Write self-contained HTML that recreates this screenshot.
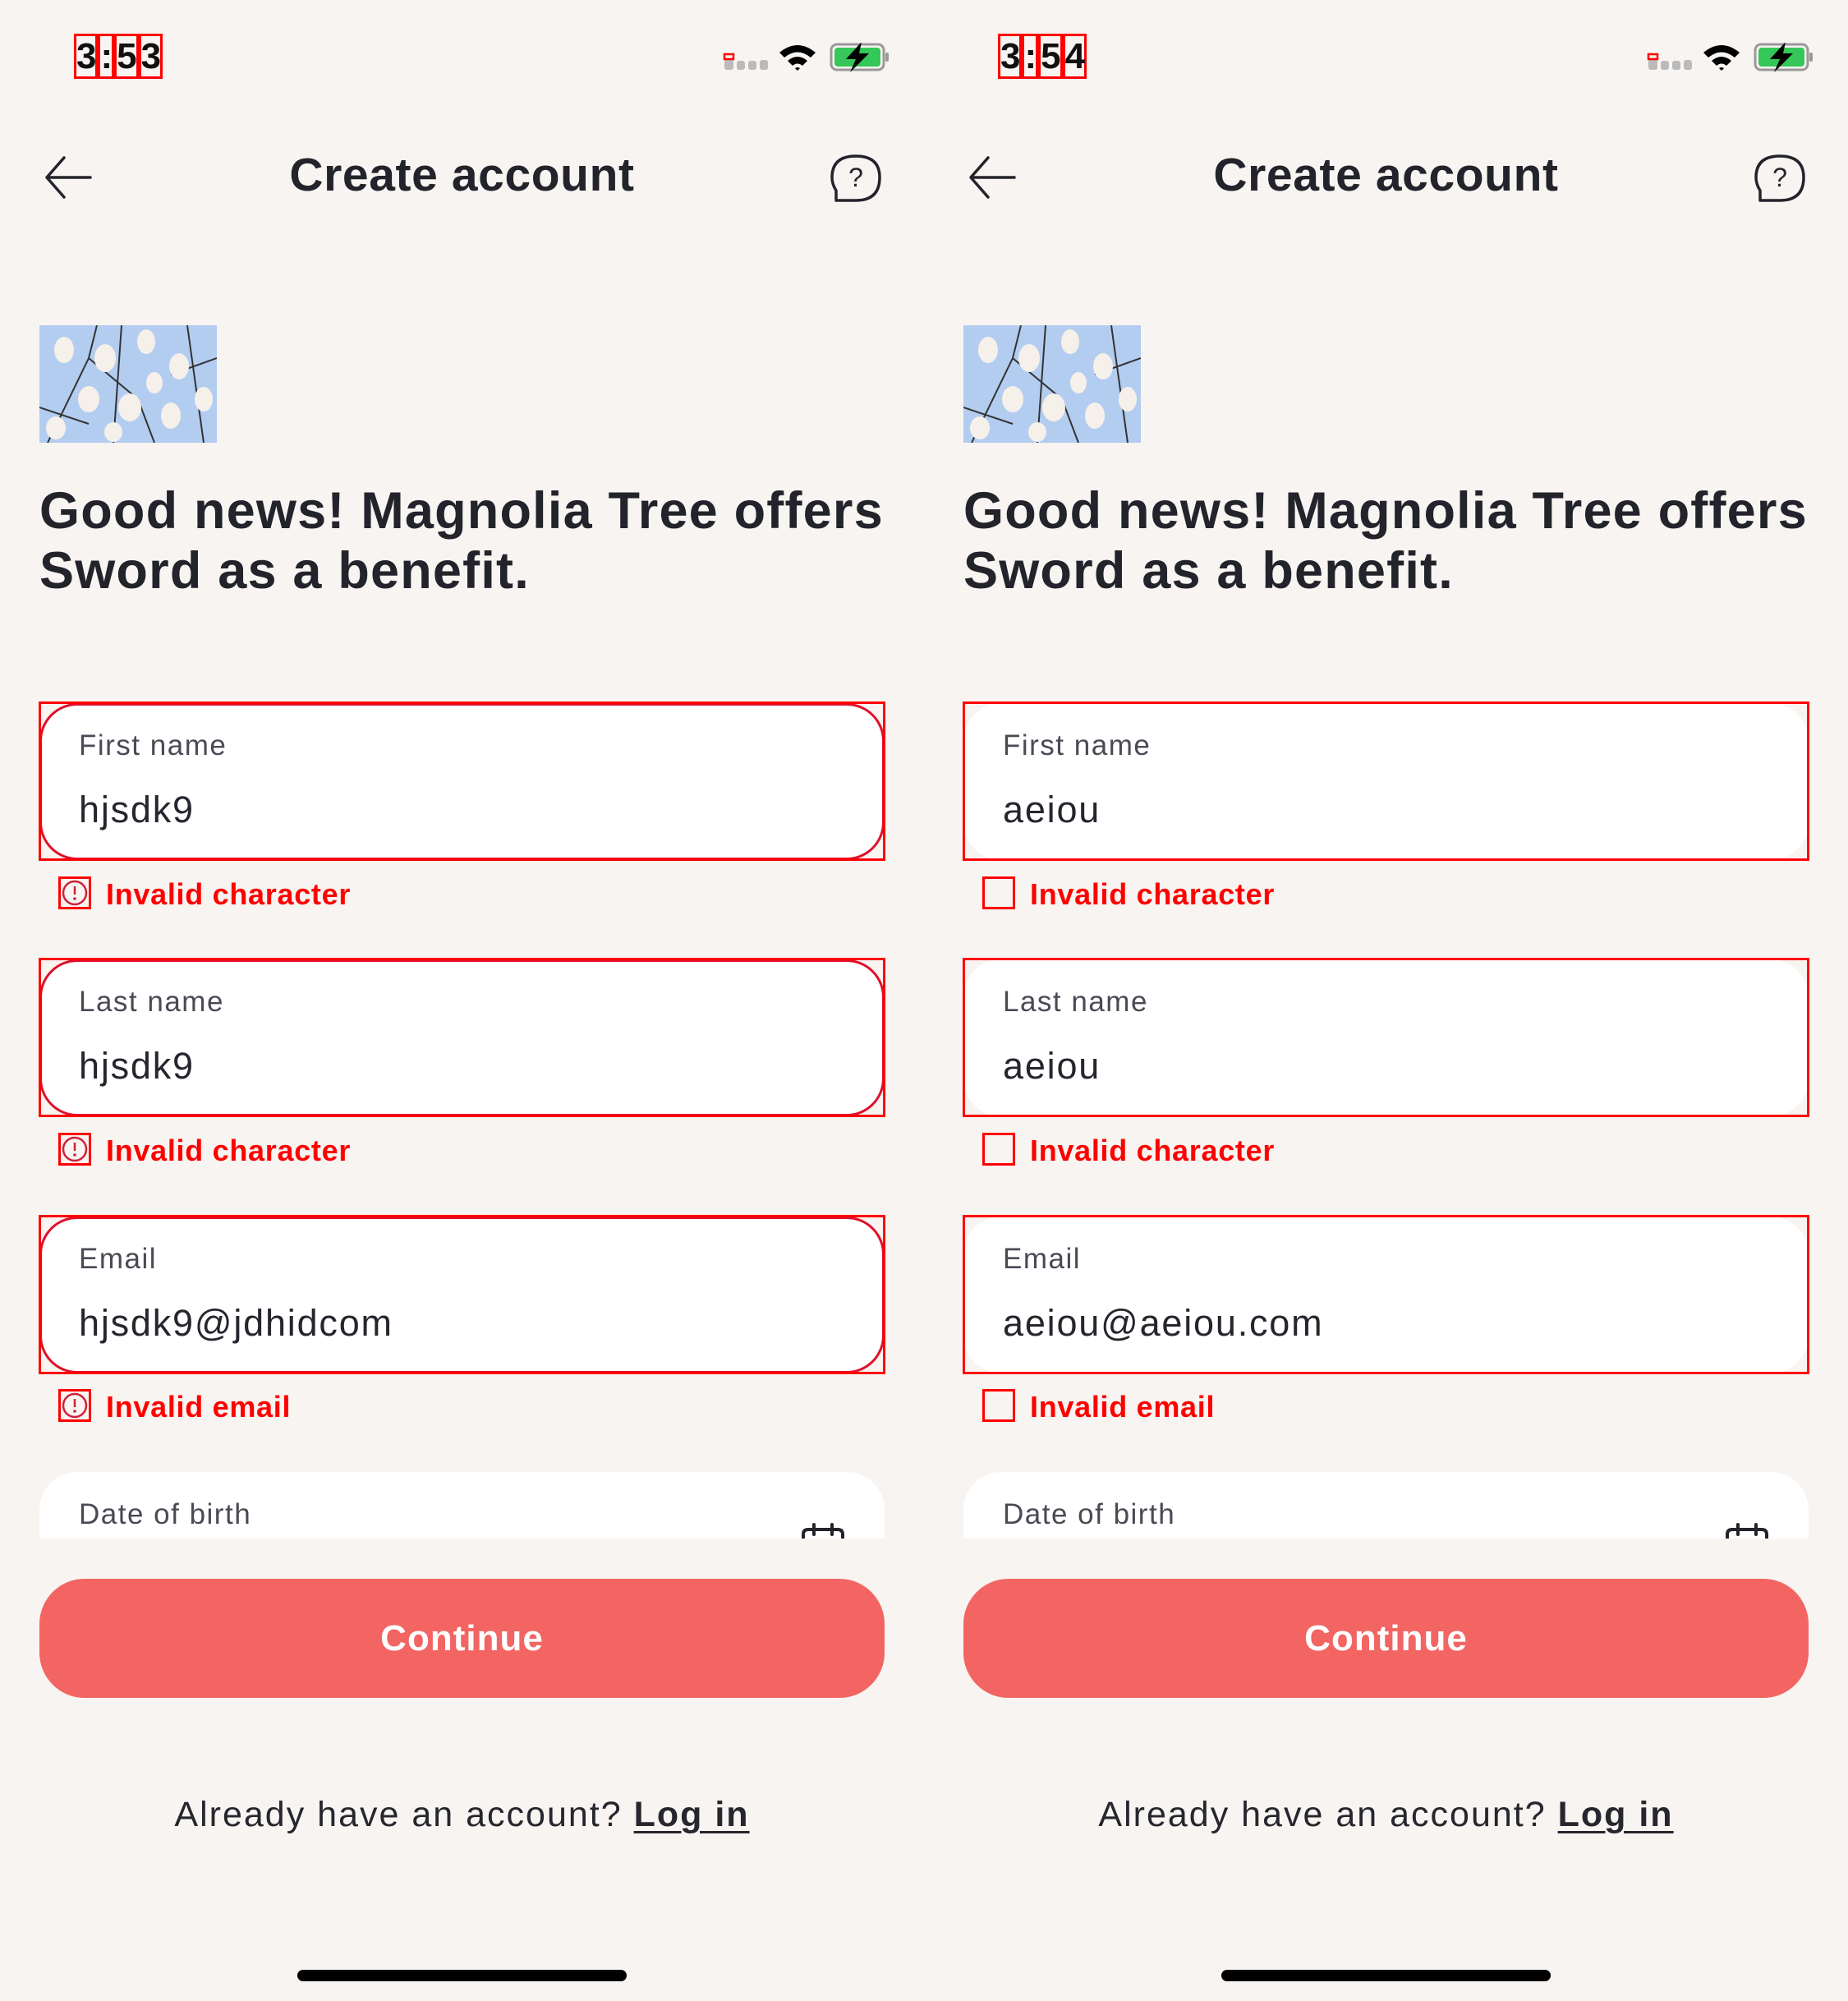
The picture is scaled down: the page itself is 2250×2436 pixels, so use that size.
<!DOCTYPE html>
<html><head><meta charset="utf-8">
<style>
*{margin:0;padding:0;box-sizing:border-box}
html,body{width:2250px;height:2436px;background:#f7f4f1;overflow:hidden;font-family:"Liberation Sans",sans-serif}
.p{position:absolute;top:0;width:1125px;height:2436px}
.a{position:absolute}
.time{left:90px;top:44px;font-size:44px;font-weight:700;color:#111;letter-spacing:-1px}
.timebox{border:3px solid #f00}
.title{left:0;width:1125px;top:180px;text-align:center;font-size:57px;font-weight:700;color:#23232b;letter-spacing:0.6px}
.head{left:48px;top:586px;font-size:63px;font-weight:700;color:#23232b;line-height:73px;letter-spacing:1.2px}
.card{left:48px;width:1029px;height:191px;background:#fff;border-radius:46px}
.rect{left:47px;width:1031px;height:194px;border:3px solid #f00}
.rb{border:3px solid #e0102a}
.lbl{left:96px;font-size:35px;color:#4a4a55;letter-spacing:1.5px}
.val{left:96px;font-size:45px;color:#26262e;letter-spacing:1.8px}
.err{left:129px;font-size:36px;font-weight:700;color:#f00;letter-spacing:0.7px}
.eicon{left:71px;width:40px;height:40px;border:3px solid #f00}
.btn{left:48px;top:1922px;width:1029px;height:145px;background:#f26563;border-radius:55px;color:#fff;font-size:44px;font-weight:700;text-align:center;line-height:145px;letter-spacing:1px}
.foot{left:0;width:1125px;top:2185px;text-align:center;font-size:43px;color:#26262e;letter-spacing:2px}
.foot u{font-weight:700;text-decoration-thickness:3px;text-underline-offset:6px}
.home{left:362px;top:2398px;width:401px;height:14px;background:#000;border-radius:7px}
</style></head><body>

<div class="p" style="left:0">
  <div class="a time"><span class="timebox">3</span><span class="timebox">:</span><span class="timebox">5</span><span class="timebox">3</span></div>
  <svg class="a" style="left:875px;top:52px" width="210" height="40" viewBox="0 0 210 40">
    <rect x="7" y="20" width="11" height="13" rx="3" fill="#bbb"/><rect x="22" y="22" width="10" height="11" rx="3" fill="#bbb"/><rect x="36" y="22" width="10" height="11" rx="3" fill="#bbb"/><rect x="50" y="21" width="10" height="12" rx="3" fill="#bbb"/>
    <rect x="7" y="14" width="11" height="6" fill="none" stroke="#f00" stroke-width="2.5"/>
    <path d="M74 12 Q96 -6 118 12 L112 18 Q96 5 80 18 Z M84 22 Q96 12 108 22 L102 28 Q96 23 90 28 Z M93 31 L96 34 L99 31 Q96 29 93 31Z" fill="#000"/>
    <rect x="137" y="2" width="64" height="31" rx="7" fill="none" stroke="#999" stroke-width="3"/>
    <rect x="141" y="6" width="56" height="23" rx="4" fill="#35c759"/>
    <rect x="203" y="12" width="4" height="11" rx="2" fill="#999"/>
    <path d="M174 -1 L155 20 L167 20 L160 36 L183 13 L171 13 Z" fill="#000"/>
  </svg>
  <svg class="a" style="left:54px;top:188px" width="60" height="56" viewBox="0 0 60 56"><path d="M56 28 H4 M24 4 L3 28 L24 52" stroke="#23232b" stroke-width="3.5" fill="none" stroke-linecap="round" stroke-linejoin="round"/></svg>
  <div class="a title">Create account</div>
  <svg class="a" style="left:1010px;top:186px" width="64" height="62" viewBox="0 0 64 62"><path d="M8 58 L8 46 Q3 38 3 30 Q3 4 32 4 Q61 4 61 30 Q61 58 32 58 Z" fill="none" stroke="#23232b" stroke-width="3.5" stroke-linejoin="round"/><text x="32" y="41" text-anchor="middle" font-size="32" font-family="Liberation Sans" fill="#23232b">?</text></svg>
  <svg class="a" style="left:48px;top:396px" width="216" height="143" viewBox="0 0 216 143"><rect width="216" height="143" fill="#b3cdf0"/><g stroke="#333" stroke-width="2" fill="none"><path d="M10 143 L60 40 L70 0 M60 40 L120 90 L140 143 M100 0 L90 143 M180 0 L200 143 M160 60 L216 40 M0 100 L60 120"/></g><g fill="#f5f0ea"><ellipse cx="30" cy="30" rx="12" ry="16"/><ellipse cx="80" cy="40" rx="13" ry="17"/><ellipse cx="130" cy="20" rx="11" ry="15"/><ellipse cx="170" cy="50" rx="12" ry="16"/><ellipse cx="60" cy="90" rx="13" ry="16"/><ellipse cx="110" cy="100" rx="14" ry="17"/><ellipse cx="160" cy="110" rx="12" ry="16"/><ellipse cx="200" cy="90" rx="11" ry="15"/><ellipse cx="20" cy="125" rx="12" ry="14"/><ellipse cx="140" cy="70" rx="10" ry="13"/><ellipse cx="90" cy="130" rx="11" ry="12"/></g></svg>
  <div class="a head">Good news! Magnolia Tree offers<br>Sword as a benefit.</div>

  <div class="a card rb" style="top:856px"></div><div class="a rect" style="top:854px"></div>
  <div class="a lbl" style="top:888px">First name</div><div class="a val" style="top:960px">hjsdk9</div>
  <div class="a eicon" style="top:1067px"><svg width="34" height="34" viewBox="0 0 34 34" style="display:block"><circle cx="17" cy="17" r="14" fill="none" stroke="#d0203a" stroke-width="2.5"/><path d="M17 9 V19" stroke="#d0203a" stroke-width="2.5"/><circle cx="17" cy="24" r="1.8" fill="#d0203a"/></svg></div>
  <div class="a err" style="top:1068px">Invalid character</div>

  <div class="a card rb" style="top:1168px"></div><div class="a rect" style="top:1166px"></div>
  <div class="a lbl" style="top:1200px">Last name</div><div class="a val" style="top:1272px">hjsdk9</div>
  <div class="a eicon" style="top:1379px"><svg width="34" height="34" viewBox="0 0 34 34" style="display:block"><circle cx="17" cy="17" r="14" fill="none" stroke="#d0203a" stroke-width="2.5"/><path d="M17 9 V19" stroke="#d0203a" stroke-width="2.5"/><circle cx="17" cy="24" r="1.8" fill="#d0203a"/></svg></div>
  <div class="a err" style="top:1380px">Invalid character</div>

  <div class="a card rb" style="top:1481px"></div><div class="a rect" style="top:1479px"></div>
  <div class="a lbl" style="top:1513px">Email</div><div class="a val" style="top:1585px">hjsdk9@jdhidcom</div>
  <div class="a eicon" style="top:1691px"><svg width="34" height="34" viewBox="0 0 34 34" style="display:block"><circle cx="17" cy="17" r="14" fill="none" stroke="#d0203a" stroke-width="2.5"/><path d="M17 9 V19" stroke="#d0203a" stroke-width="2.5"/><circle cx="17" cy="24" r="1.8" fill="#d0203a"/></svg></div>
  <div class="a err" style="top:1692px">Invalid email</div>

  <div class="a" style="left:48px;top:1792px;width:1029px;height:81px;overflow:hidden"><div style="width:1029px;height:191px;background:#fff;border-radius:46px"></div>
    <svg style="position:absolute;left:926px;top:62px" width="56" height="30" viewBox="0 0 56 30"><path d="M4 30 V14 Q4 8 10 8 H46 Q52 8 52 14 V30 M17 2 V14 M39 2 V14" stroke="#23232b" stroke-width="4" fill="none" stroke-linecap="round"/></svg></div>
  <div class="a lbl" style="top:1824px">Date of birth</div>

  <div class="a btn">Continue</div>
  <div class="a foot">Already have an account? <u>Log in</u></div>
  <div class="a home"></div>
</div>

<div class="p" style="left:1125px">
  <div class="a time"><span class="timebox">3</span><span class="timebox">:</span><span class="timebox">5</span><span class="timebox">4</span></div>
  <svg class="a" style="left:875px;top:52px" width="210" height="40" viewBox="0 0 210 40">
    <rect x="7" y="20" width="11" height="13" rx="3" fill="#bbb"/><rect x="22" y="22" width="10" height="11" rx="3" fill="#bbb"/><rect x="36" y="22" width="10" height="11" rx="3" fill="#bbb"/><rect x="50" y="21" width="10" height="12" rx="3" fill="#bbb"/>
    <rect x="7" y="14" width="11" height="6" fill="none" stroke="#f00" stroke-width="2.5"/>
    <path d="M74 12 Q96 -6 118 12 L112 18 Q96 5 80 18 Z M84 22 Q96 12 108 22 L102 28 Q96 23 90 28 Z M93 31 L96 34 L99 31 Q96 29 93 31Z" fill="#000"/>
    <rect x="137" y="2" width="64" height="31" rx="7" fill="none" stroke="#999" stroke-width="3"/>
    <rect x="141" y="6" width="56" height="23" rx="4" fill="#35c759"/>
    <rect x="203" y="12" width="4" height="11" rx="2" fill="#999"/>
    <path d="M174 -1 L155 20 L167 20 L160 36 L183 13 L171 13 Z" fill="#000"/>
  </svg>
  <svg class="a" style="left:54px;top:188px" width="60" height="56" viewBox="0 0 60 56"><path d="M56 28 H4 M24 4 L3 28 L24 52" stroke="#23232b" stroke-width="3.5" fill="none" stroke-linecap="round" stroke-linejoin="round"/></svg>
  <div class="a title">Create account</div>
  <svg class="a" style="left:1010px;top:186px" width="64" height="62" viewBox="0 0 64 62"><path d="M8 58 L8 46 Q3 38 3 30 Q3 4 32 4 Q61 4 61 30 Q61 58 32 58 Z" fill="none" stroke="#23232b" stroke-width="3.5" stroke-linejoin="round"/><text x="32" y="41" text-anchor="middle" font-size="32" font-family="Liberation Sans" fill="#23232b">?</text></svg>
  <svg class="a" style="left:48px;top:396px" width="216" height="143" viewBox="0 0 216 143"><rect width="216" height="143" fill="#b3cdf0"/><g stroke="#333" stroke-width="2" fill="none"><path d="M10 143 L60 40 L70 0 M60 40 L120 90 L140 143 M100 0 L90 143 M180 0 L200 143 M160 60 L216 40 M0 100 L60 120"/></g><g fill="#f5f0ea"><ellipse cx="30" cy="30" rx="12" ry="16"/><ellipse cx="80" cy="40" rx="13" ry="17"/><ellipse cx="130" cy="20" rx="11" ry="15"/><ellipse cx="170" cy="50" rx="12" ry="16"/><ellipse cx="60" cy="90" rx="13" ry="16"/><ellipse cx="110" cy="100" rx="14" ry="17"/><ellipse cx="160" cy="110" rx="12" ry="16"/><ellipse cx="200" cy="90" rx="11" ry="15"/><ellipse cx="20" cy="125" rx="12" ry="14"/><ellipse cx="140" cy="70" rx="10" ry="13"/><ellipse cx="90" cy="130" rx="11" ry="12"/></g></svg>
  <div class="a head">Good news! Magnolia Tree offers<br>Sword as a benefit.</div>

  <div class="a card" style="top:856px"></div><div class="a rect" style="top:854px"></div>
  <div class="a lbl" style="top:888px">First name</div><div class="a val" style="top:960px">aeiou</div>
  <div class="a eicon" style="top:1067px"></div>
  <div class="a err" style="top:1068px">Invalid character</div>

  <div class="a card" style="top:1168px"></div><div class="a rect" style="top:1166px"></div>
  <div class="a lbl" style="top:1200px">Last name</div><div class="a val" style="top:1272px">aeiou</div>
  <div class="a eicon" style="top:1379px"></div>
  <div class="a err" style="top:1380px">Invalid character</div>

  <div class="a card" style="top:1481px"></div><div class="a rect" style="top:1479px"></div>
  <div class="a lbl" style="top:1513px">Email</div><div class="a val" style="top:1585px">aeiou@aeiou.com</div>
  <div class="a eicon" style="top:1691px"></div>
  <div class="a err" style="top:1692px">Invalid email</div>

  <div class="a" style="left:48px;top:1792px;width:1029px;height:81px;overflow:hidden"><div style="width:1029px;height:191px;background:#fff;border-radius:46px"></div>
    <svg style="position:absolute;left:926px;top:62px" width="56" height="30" viewBox="0 0 56 30"><path d="M4 30 V14 Q4 8 10 8 H46 Q52 8 52 14 V30 M17 2 V14 M39 2 V14" stroke="#23232b" stroke-width="4" fill="none" stroke-linecap="round"/></svg></div>
  <div class="a lbl" style="top:1824px">Date of birth</div>

  <div class="a btn">Continue</div>
  <div class="a foot">Already have an account? <u>Log in</u></div>
  <div class="a home"></div>
</div>
</body></html>
